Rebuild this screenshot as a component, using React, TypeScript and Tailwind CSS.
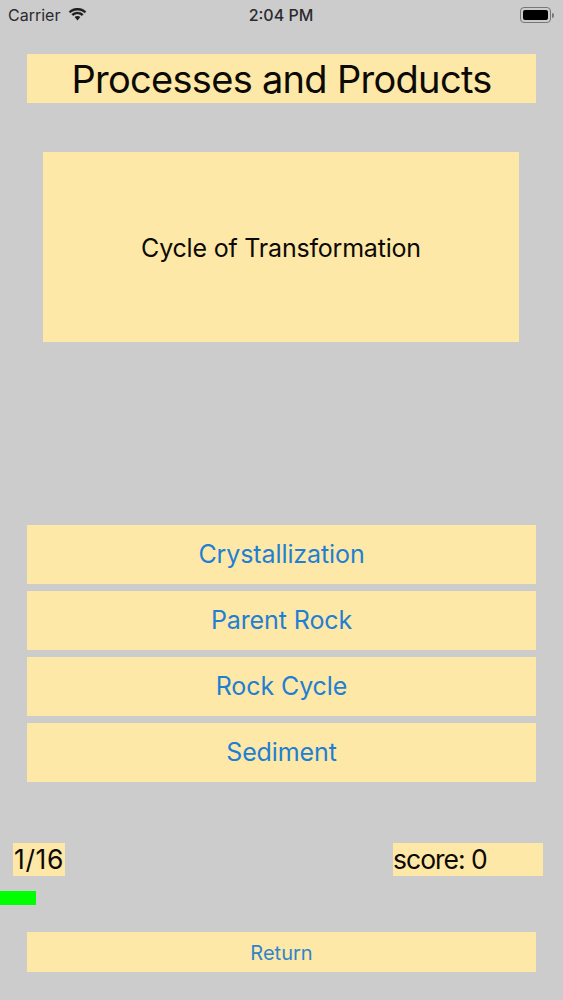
const CHOICES = ["Crystallization", "Parent Rock", "Rock Cycle", "Sediment"];

const WifiIcon = () => (
  <svg width="19" height="14" viewBox="0 0 19 14" aria-hidden>
    <path d="M9.5 2.2c2.7 0 5.2 1 7.1 2.8l1.4-1.5C15.700 1.300 12.700 0 9.500 0S3.300 1.300 1 3.500l1.400 1.500c1.900-1.800 4.400-2.800 7.100-2.800z" fill="#1c1c1e" stroke="#1c1c1e" strokeWidth={0.4} />
    <path d="M9.500 6.100c1.600 0 3.100 .6 4.300 1.700l1.500-1.500C13.700 4.800 11.700 4 9.500 4s-4.200 .8-5.800 2.300l1.500 1.500c1.200-1.100 2.700-1.700 4.300-1.700z" fill="#1c1c1e" stroke="#1c1c1e" strokeWidth={0.4} />
    <path d="M9.500 8c-1.100 0-2.100 .4-2.900 1.100l2.900 3.400 2.900-3.400C11.600 8.400 10.600 8 9.500 8z" fill="#1c1c1e" />
  </svg>
);

const StatusBar = () => (
  <div className="flex h-[30px] items-center justify-between pl-[8px] pr-[9px] text-[16px] text-[#2a2a2d]">
    <div className="flex w-[120px] items-center gap-[8px]">
      <span>Carrier</span>
      <WifiIcon />
    </div>
    <span className="font-medium">2:04 PM</span>
    <div className="flex w-[120px] items-center justify-end">
      <div className="flex h-[16px] w-[31px] items-center rounded-[4px] border border-[#77777a] p-[2px]">
        <div className="h-full w-full rounded-[2px] bg-black" />
      </div>
      <div className="ml-[1px] h-[5px] w-[1.5px] rounded-r-sm bg-[#77777a]" />
    </div>
  </div>
);

export default function App() {
  return (
    <div
      className="flex h-[1000px] w-[563px] flex-col overflow-hidden bg-[#cdcccd]"
      style={{ fontFamily: "Inter, 'Liberation Sans', sans-serif" }}
    >
      <StatusBar />

      <div className="mx-[27px] mt-[24px] flex h-[49px] items-center justify-center bg-[#fee8a7] pt-[1px] text-[38px] tracking-[-0.7px] text-[#0c0a05]">
        Processes and Products
      </div>

      <div className="ml-[43px] mr-[44px] mt-[49px] flex h-[190px] items-center justify-center bg-[#fee8a7] pt-[3px] text-[25px] tracking-[-0.2px] text-[#0c0a05]">
        Cycle of Transformation
      </div>

      <div className="mx-[27px] mt-[183px] flex flex-col gap-[7px]">
        {CHOICES.map((c) => (
          <button
            key={c}
            className="flex h-[59px] items-center justify-center bg-[#fee8a7] pt-[1px] text-[25px] tracking-[-0.1px] text-[#1f7fd3]"
          >
            {c}
          </button>
        ))}
      </div>

      <div className="mt-[61px] flex h-[33px] items-stretch justify-between pl-[13px] pr-[20px] text-[26.5px] text-[#0c0a05]">
        <div className="flex w-[52px] items-center bg-[#fee8a7] pl-[1px] tracking-[0.6px]">1/16</div>
        <div className="flex w-[150px] items-center bg-[#fee8a7] tracking-[-1px]">score: 0</div>
      </div>

      <div className="mt-[15px] h-[14px] w-[36px] bg-[#00ff00]" />

      <button className="mx-[27px] mt-[27px] flex h-[40px] items-center justify-center bg-[#fee8a7] pt-[1px] text-[20px] text-[#2f84cc]">
        Return
      </button>
    </div>
  );
}
